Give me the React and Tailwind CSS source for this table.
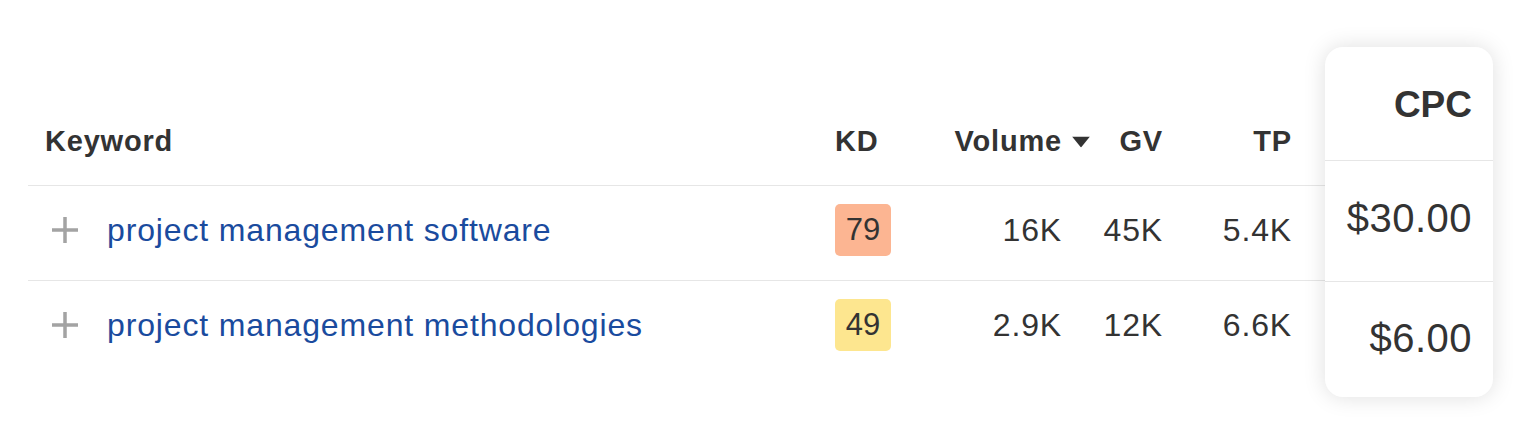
import React from 'react';

const rows = [
    { keyword: 'project management software', kd: 79, kdColor: 'bg-[#fcb592]', volume: '16K', gv: '45K', tp: '5.4K', cpc: '$30.00' },
    { keyword: 'project management methodologies', kd: 49, kdColor: 'bg-[#fde68f]', volume: '2.9K', gv: '12K', tp: '6.6K', cpc: '$6.00' },
];

const PlusIcon = () => (
    <svg width="30" height="30" viewBox="0 0 30 30" className="shrink-0">
        <path d="M15 2v26M2 15h26" stroke="#a3a3a3" strokeWidth="3.5" />
    </svg>
);

const App = () => {
    return (
        <div
            className="h-[446px] w-[1520px] bg-white text-[#333]"
            style={{ fontFamily: '"Liberation Sans", Arial, sans-serif' }}
        >
            <div className="flex items-start pl-[28px] pt-[47px]">
                {/* main table */}
                <div className="mt-[48px] flex-1">
                    <div className="flex h-[90px] items-center pt-[4px] pr-[33px] text-[29px] font-bold tracking-[0.8px]">
                        <div className="flex-1 pl-[17px]">Keyword</div>
                        <div className="w-[100px]">KD</div>
                        <div className="relative w-[127px] text-right">
                            Volume
                            <svg width="18" height="11" viewBox="0 0 18 11" className="absolute right-[-28px] top-1/2 -translate-y-1/2">
                                <path d="M0 0h18L9 11z" fill="#333" />
                            </svg>
                        </div>
                        <div className="w-[101px] text-right">GV</div>
                        <div className="w-[129px] text-right">TP</div>
                    </div>
                    {rows.map((r) => (
                        <div key={r.keyword} className="flex h-[95px] items-center border-t border-[#e6e6e6] pb-[6px] pr-[33px] text-[32px] tracking-[0.85px]">
                            <div className="flex flex-1 items-center gap-[27px] pl-[22px]">
                                <PlusIcon />
                                <a className="text-[#1a4b9e]">{r.keyword}</a>
                            </div>
                            <div className="w-[100px]">
                                <span className={`flex h-[52px] w-[56px] items-center justify-center rounded-[5px] text-[31px] tracking-normal ${r.kdColor}`}>
                                    {r.kd}
                                </span>
                            </div>
                            <div className="w-[127px] text-right">{r.volume}</div>
                            <div className="w-[101px] text-right">{r.gv}</div>
                            <div className="w-[129px] text-right">{r.tp}</div>
                        </div>
                    ))}
                </div>

                {/* highlighted CPC column */}
                <div className="mr-[27px] w-[168px] rounded-[18px] bg-white text-right shadow-[0_0_22px_rgba(0,0,0,0.13)]">
                    <div className="flex h-[113px] items-center justify-end pr-[21px] pt-[2px] text-[37px] font-bold">CPC</div>
                    <div className="flex h-[121px] items-center justify-end border-t border-[#e6e6e6] pb-[6px] pr-[21px] text-[40px] tracking-[0.5px]">
                        {rows[0].cpc}
                    </div>
                    <div className="flex h-[116px] items-center justify-end border-t border-[#e6e6e6] pb-[4px] pr-[21px] text-[40px] tracking-[0.5px]">
                        {rows[1].cpc}
                    </div>
                </div>
            </div>
        </div>
    );
};

export default App;
